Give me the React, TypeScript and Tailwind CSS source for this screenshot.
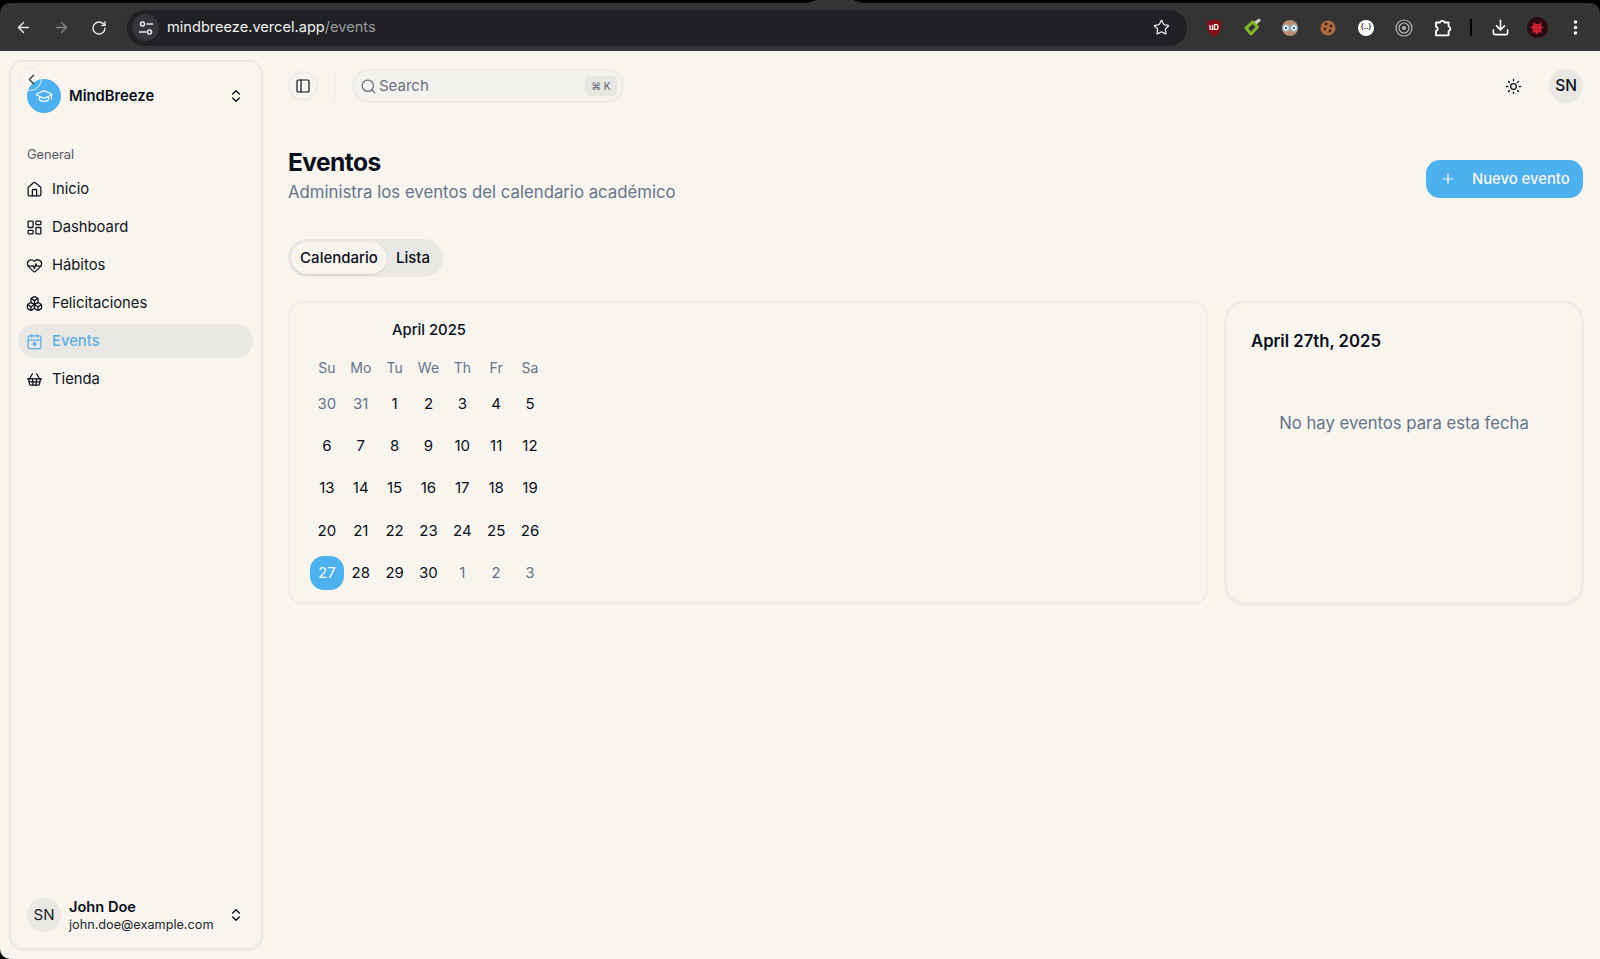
import React from "react";
import { ArrowLeft, ArrowRight, RotateCw, Star, Download, MoreVertical, ChevronsUpDown, ChevronLeft, GraduationCap, House, LayoutDashboard, HeartPulse, Boxes, ShoppingBasket, PanelLeft, Search, Sun, Plus } from "lucide-react";

const font = { fontFamily: "Inter, 'Liberation Sans', sans-serif" };

function Tune() {
  return (
    <svg width="16" height="16" viewBox="0 0 16 16" fill="none" stroke="#e8eaed" strokeWidth="1.5">
      <circle cx="4.5" cy="4" r="2" />
      <path d="M8.5 4H15" />
      <circle cx="11.5" cy="12" r="2" />
      <path d="M1 12h7.5" />
    </svg>
  );
}

function EventIcon({ size = 17 }: { size?: number }) {
  return (
    <svg width={size} height={size} viewBox="0 0 24 24" fill="none" stroke="currentColor" strokeWidth="1.8" strokeLinecap="round" strokeLinejoin="round">
      <path d="M8 2v4" />
      <path d="M16 2v4" />
      <rect x="3" y="4" width="18" height="18" rx="2" />
      <path d="M3 10h18" />
      <rect x="10.5" y="14" width="3" height="3" fill="currentColor" />
    </svg>
  );
}

function Cell({ children }: { children: React.ReactNode }) {
  return <div className="w-[38px] h-[24px] shrink-0 flex items-center justify-center">{children}</div>;
}

function Exts() {
  return (
    <div className="flex items-center ml-[8px]">
      <Cell>
        <svg width="16" height="18" viewBox="0 0 16 18">
          <path d="M8 0.5 15.5 2.5C15.5 10 14 15 8 17.5 2 15 .5 10 .5 2.5Z" fill="#800f16" />
          <text x="8" y="11" fontSize="7.5" fontWeight="700" fill="#fff" textAnchor="middle" fontFamily="Inter">uD</text>
        </svg>
      </Cell>
      <Cell>
        <svg width="19" height="20" viewBox="0 0 19 20" fill="none">
          <path d="M3 10 10 4 14.5 9 8 16Z" stroke="#83b72f" strokeWidth="3" strokeLinejoin="round" />
          <path d="M12.5 5 17 1.5" stroke="#d9d9c8" strokeWidth="3" />
        </svg>
      </Cell>
      <Cell>
        <svg width="18" height="18" viewBox="0 0 18 18">
          <circle cx="9" cy="9" r="8" fill="#b98d72" />
          <circle cx="5" cy="9" r="3.2" fill="#dfe9ee" stroke="#8cc2de" />
          <circle cx="13" cy="9" r="3.2" fill="#dfe9ee" stroke="#8cc2de" />
          <circle cx="5" cy="9" r="1" fill="#334" />
          <circle cx="13" cy="9" r="1" fill="#334" />
        </svg>
      </Cell>
      <Cell>
        <svg width="18" height="18" viewBox="0 0 18 18">
          <circle cx="9" cy="9" r="7.5" fill="#b06a3f" />
          <circle cx="7" cy="5" r="1.4" fill="#3b1f12" />
          <circle cx="12" cy="7" r="1.4" fill="#3b1f12" />
          <circle cx="6" cy="10" r="1.4" fill="#3b1f12" />
          <circle cx="11" cy="12" r="1.4" fill="#3b1f12" />
        </svg>
      </Cell>
      <Cell>
        <div className="w-[16px] h-[16px] rounded-full bg-white flex items-center justify-center text-[7px] text-[#333] font-bold">{"{..}"}</div>
      </Cell>
      <Cell>
        <svg width="18" height="18" viewBox="0 0 18 18" fill="none" stroke="#b9b9b9">
          <circle cx="9" cy="9" r="8" strokeWidth="1.2" />
          <circle cx="9" cy="9" r="5" strokeWidth="1.2" />
          <circle cx="9" cy="9" r="2" fill="#b9b9b9" stroke="none" />
        </svg>
      </Cell>
      <Cell>
        <svg width="19" height="19" viewBox="0 0 19 19" fill="none" stroke="#fff" strokeWidth="1.8" strokeLinejoin="round">
          <path d="M3 4.5h4a2.4 2.4 0 0 1 4.6 0h4v4a2.4 2.4 0 0 1 0 4.6v4.2H3v-4.3a2.2 2.2 0 0 0 0-4.3Z" />
        </svg>
      </Cell>
    </div>
  );
}

function Nav({ icon: I, label, active }: { icon: React.ElementType; label: string; active?: boolean }) {
  return (
    <div className={`h-[34px] flex items-center gap-[9px] pl-[8px] rounded-[17px] text-[14.8px] ${active ? "bg-[#e9e8e4] text-[#5ab0e6] font-medium" : "text-[#0f1420]"}`}>
      <I size={17} strokeWidth={1.8} />
      <span>{label}</span>
    </div>
  );
}

const weeks = [
  ["30", "31", "1", "2", "3", "4", "5"],
  ["6", "7", "8", "9", "10", "11", "12"],
  ["13", "14", "15", "16", "17", "18", "19"],
  ["20", "21", "22", "23", "24", "25", "26"],
  ["27", "28", "29", "30", "1", "2", "3"],
];

export default function App() {
  return (
    <div className="relative w-[1600px] h-[959px] overflow-hidden bg-black flex flex-col" style={font}>
      <div className="absolute left-[807px] top-0 w-[56px] h-[3px] bg-[#343434] [clip-path:polygon(18%_0,82%_0,100%_100%,0_100%)]" />
      <header className="h-[48px] mt-[3px] pt-[1px] shrink-0 bg-[#343434] rounded-t-[10px] flex items-center pl-[15px] text-[#e8eaed]">
        <ArrowLeft size={17} strokeWidth={2} className="shrink-0" />
        <ArrowRight size={17} strokeWidth={2} className="shrink-0 ml-[21px] text-[#85878a]" />
        <RotateCw size={16} strokeWidth={2} className="shrink-0 ml-[21px]" />
        <div className="shrink-0 ml-[20px] h-[36px] w-[1060px] rounded-full bg-[#1f2124] flex items-center pl-[5px] pr-[17px]">
          <div className="w-[27px] h-[27px] rounded-full bg-[#34363a] flex items-center justify-center"><Tune /></div>
          <div className="ml-[8px] text-[14.6px] flex-1 text-[#f1f1f1]">mindbreeze.vercel.app<span className="text-[#9a9ca0]">/events</span></div>
          <Star size={17} strokeWidth={1.8} />
        </div>
        <Exts />
        <div className="shrink-0 ml-[9px] w-[2px] h-[17px] bg-black" />
        <div className="shrink-0 ml-[9px] w-[38px] flex justify-center"><Download size={19} strokeWidth={2} className="text-white" /></div>
        <div className="shrink-0 ml-[8px] w-[21px] h-[21px] rounded-full bg-[#2a0b10] flex items-center justify-center">
          <svg width="15" height="15" viewBox="0 0 15 15" fill="#c8202f"><path d="M3 2l3 2h3l3-2-1 4 3 1-3 2 1 4-3-1-1 2h-2l-1-2-3 1 1-4-3-2 3-1z" /></svg>
        </div>
        <MoreVertical size={19} strokeWidth={2.5} className="shrink-0 ml-[18px] text-white" />
      </header>
      <div className="flex-1 flex bg-[#f8f5ef] rounded-bl-[10px] text-[#0a0f1c]">
        <aside className="ml-[9px] mt-[9px] mb-[9px] w-[254px] shrink-0 rounded-[14px] border-2 border-[#ece9e4] shadow-[0_1px_3px_rgba(0,0,0,0.05)] flex flex-col relative">
          <div className="absolute left-[7px] top-[5px] w-[24px] h-[24px] rounded-full border border-[#eeebe6]" />
          <ChevronLeft size={17} strokeWidth={1.8} className="absolute left-[12px] top-[9px] text-[#3b3b3b]" />
          <div className="h-[68px] flex items-center pl-[16px] pr-[17px]">
            <div className="w-[34px] h-[34px] rounded-full bg-[#4db0ef] flex items-center justify-center text-white">
              <GraduationCap size={18} strokeWidth={1.6} />
            </div>
            <span className="ml-[8px] flex-1 text-[14.8px] font-semibold">MindBreeze</span>
            <ChevronsUpDown size={16} strokeWidth={2} />
          </div>
          <div className="mt-[15px] pl-[16px] text-[12.8px] text-[#55585e] h-[20px]">General</div>
          <nav className="mt-[7px] ml-[7px] mr-[8px] flex flex-col gap-[4px]">
            <Nav icon={House} label="Inicio" />
            <Nav icon={LayoutDashboard} label="Dashboard" />
            <Nav icon={HeartPulse} label="Hábitos" />
            <Nav icon={Boxes} label="Felicitaciones" />
            <Nav icon={EventIcon} label="Events" active />
            <Nav icon={ShoppingBasket} label="Tienda" />
          </nav>
          <div className="mt-auto mb-[14px] flex items-center pl-[16px] pr-[17px]">
            <div className="w-[34px] h-[34px] rounded-full bg-[#e9e8e4] flex items-center justify-center text-[15px] text-[#1a1d24]">SN</div>
            <div className="ml-[8px] pt-[2px] flex-1 flex flex-col leading-[18px]">
              <span className="text-[14.6px] font-semibold">John Doe</span>
              <span className="text-[12.7px] text-[#22252c]">john.doe@example.com</span>
            </div>
            <ChevronsUpDown size={16} strokeWidth={2} />
          </div>
        </aside>
        <main className="flex-1 min-w-0 pl-[25px] pr-[17px]">
          <div className="h-[70px] flex items-center">
            <div className="w-[30px] h-[30px] rounded-full border-2 border-[#efece7] flex items-center justify-center">
              <PanelLeft size={16} strokeWidth={1.8} />
            </div>
            <div className="ml-[16px] h-[32px] w-px bg-[#ebe8e3]" />
            <div className="ml-[17px] w-[272px] h-[34px] rounded-full border-2 border-[#efece7] bg-[#f4f2ed] flex items-center pl-[6px] pr-[5px] text-[#66707f]">
              <Search size={17} strokeWidth={1.8} />
              <span className="ml-[2px] flex-1 text-[15px]">Search</span>
              <span className="w-[32px] h-[20px] rounded-[5px] bg-[#e8e6e1] text-[10px] flex items-center justify-center font-medium">⌘ K</span>
            </div>
            <Sun size={17} strokeWidth={1.8} className="ml-auto" />
            <div className="ml-[27px] w-[34px] h-[34px] rounded-full bg-[#e9e8e4] flex items-center justify-center text-[15.5px] font-medium">SN</div>
          </div>
          <div className="mt-[26px] flex items-start justify-between">
            <div>
              <h1 className="text-[24.6px] leading-[30px] font-bold tracking-[-0.6px]">Eventos</h1>
              <p className="mt-[3px] text-[16.75px] leading-[24px] text-[#64748b]">Administra los eventos del calendario académico</p>
            </div>
            <button className="mt-[13px] h-[38px] w-[157px] rounded-[14px] bg-[#4db0ef] text-[#f8f5ef] flex items-center pl-[14px] text-[14.8px] font-medium">
              <Plus size={16} strokeWidth={1.8} />
              <span className="ml-[16px]">Nuevo evento</span>
            </button>
          </div>
          <div className="mt-[35px] w-[155px] h-[38px] rounded-full bg-[#e9e8e4] flex items-center p-[3px] text-[15px] font-medium">
            <div className="h-[32px] w-[96px] rounded-full bg-[#f8f5ef] shadow-[0_1px_2px_rgba(0,0,0,0.12)] flex items-center justify-center">Calendario</div>
            <div className="ml-[9px]">Lista</div>
          </div>
          <div className="mt-[24px] grid grid-cols-[920px_1fr] gap-[17px]">
            <section className="h-[303px] rounded-[14px] border-2 border-[#f0ede8] pl-[20px] pt-[15px]">
              <div className="w-[238px] text-center h-[24px] text-[14.8px] leading-[24px] font-medium">April 2025</div>
              <div className="mt-[16px] grid grid-cols-[repeat(7,33.85px)] text-[14px] text-[#64748b] h-[20px] leading-[20px] text-center">
                {["Su", "Mo", "Tu", "We", "Th", "Fr", "Sa"].map((d) => <div key={d}>{d}</div>)}
              </div>
              <div className="mt-[8.5px] flex flex-col gap-[8.35px]">
                {weeks.map((w, i) => (
                  <div key={i} className="grid grid-cols-[repeat(7,33.85px)] h-[34px] text-[15px] text-center leading-[34px]">
                    {w.map((d, j) => {
                      const out = (i === 0 && j < 2) || (i === 4 && j > 3);
                      const sel = d === "27";
                      return (
                        <div key={j} className={sel ? "rounded-[14px] bg-[#4db0ef] text-[#f8f5ef]" : out ? "text-[#64748b]" : ""}>{d}</div>
                      );
                    })}
                  </div>
                ))}
              </div>
            </section>
            <section className="h-[303px] rounded-[20px] border-2 border-[#eeebe6] shadow-[0_1px_3px_rgba(0,0,0,0.08)] flex flex-col">
              <div className="pl-[24px] pt-[26px] text-[16.7px] leading-[24px] font-semibold">April 27th, 2025</div>
              <div className="mt-[58px] text-center text-[16.7px] leading-[24px] text-[#64748b]">No hay eventos para esta fecha</div>
            </section>
          </div>
        </main>
      </div>
    </div>
  );
}
